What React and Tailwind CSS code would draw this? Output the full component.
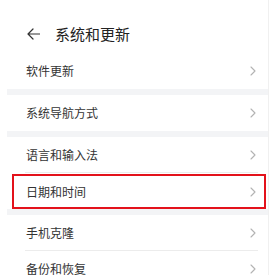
import React from "react";

const font = { fontFamily: '"Noto Sans CJK SC", "Noto Sans", sans-serif' };

function Chevron() {
  return (
    <svg width="6" height="10" viewBox="0 0 6 10" className="shrink-0">
      <path d="M1 1 L5 5 L1 9" fill="none" stroke="#b3b3b3" strokeWidth="1.1" strokeLinecap="round" strokeLinejoin="round" />
    </svg>
  );
}

function Row({ label, divider }) {
  return (
    <div className="relative h-[36px] flex items-center pl-[26px] pr-[12px] justify-between">
      <span className="text-[12px] leading-none text-[#333333]">{label}</span>
      <Chevron />
      {divider && <div className="absolute bottom-0 left-[25px] right-[10px] h-px bg-[#ececec]" />}
    </div>
  );
}

function Band() {
  return <div className="ml-[7px] h-[6px] bg-[#f3f4f6]" />;
}

export default function App() {
  return (
    <div className="w-[269px] h-[275px] overflow-hidden bg-white border-r border-[#f0f0f0]" style={font}>
      <div className="h-[53px] flex items-center pl-[27px] pt-[14px]">
        <svg width="13" height="12" viewBox="0 0 13 12" className="shrink-0">
          <path d="M12.5 6 H1 M6 1 L1 6 L6 11" fill="none" stroke="#333" strokeWidth="1.2" strokeLinecap="round" strokeLinejoin="round" />
        </svg>
        <span className="ml-[15px] text-[15px] leading-none text-[#222222]">系统和更新</span>
      </div>
      <Row label="软件更新" />
      <Band />
      <Row label="系统导航方式" />
      <Band />
      <div className="h-[37px]">
        <Row label="语言和输入法" divider />
      </div>
      <div className="ml-[12px] mr-[2px] h-[35px] border-[2px] border-[#e3121b] flex items-center pl-[12px] pr-[8px] justify-between">
        <span className="text-[12px] leading-none text-[#333333]">日期和时间</span>
        <Chevron />
      </div>
      <Band />
      <Row label="手机克隆" divider />
      <Row label="备份和恢复" />
    </div>
  );
}
